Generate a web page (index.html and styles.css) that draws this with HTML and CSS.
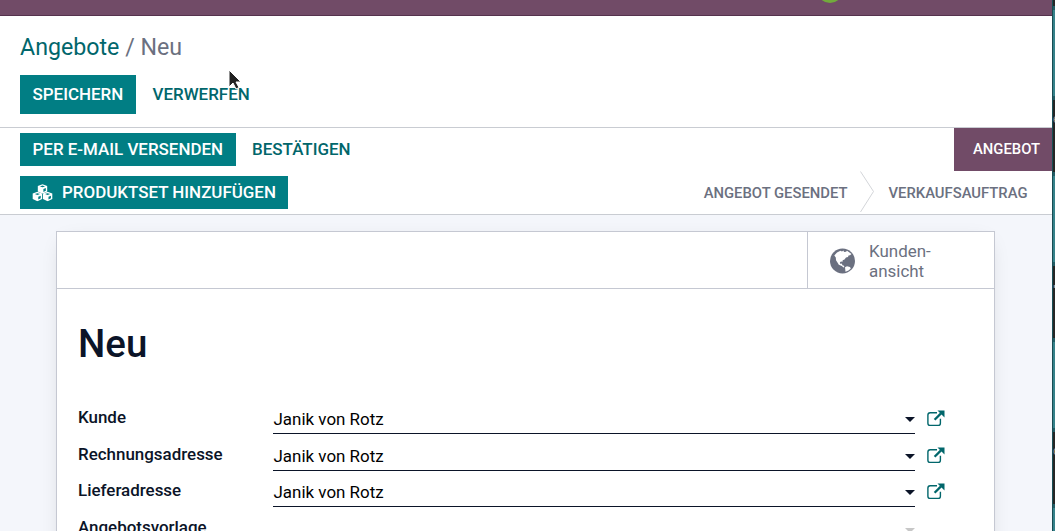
FILE: index.html
```html
<!DOCTYPE html>
<html lang="de">
<head>
<meta charset="utf-8">
<title>Angebote / Neu</title>
<link rel="stylesheet" href="styles.css">
</head>
<body>
<svg class="defs" width="0" height="0">
  <symbol id="external" viewBox="0 0 18 17">
    <path d="M10 2.800H3.200Q.9 2.800.9 5v8.200q0 2.200 2.300 2.200h7.900q2.300 0 2.300-2.200V8.800" fill="none" stroke="currentColor" stroke-width="1.400"/>
    <path d="M7.600 9.800 14 3.400" fill="none" stroke="currentColor" stroke-width="2.300"/>
    <path d="M10.500.5h7v7z" fill="currentColor"/>
  </symbol>
  <symbol id="cube" viewBox="0 0 10 10">
    <path d="M5 .2 9.800 2v5.600L5 9.900.2 7.600V2z" fill="currentColor"/>
    <path d="M2.400 2.500 5 3.400l2.600-.9L5 1.600zM5.900 5.200v2.900l2.500-1.200V4.200z" fill="#017e84"/>
  </symbol>
</svg>
<div class="screen">
  <main class="window">
    <header class="navbar"><span class="avatar"></span></header>
    <section class="control">
      <h2 class="breadcrumb"><a>Angebote</a><span> / Neu</span></h2>
      <div class="actions">
        <button class="btn primary save">Speichern</button>
        <button class="btn link">Verwerfen</button>
      </div>
      <svg class="cursor" viewBox="0 0 14 22"><path d="M1 1v17l4-4 3 6 3-1.500-3-5.500h5z" fill="#222" stroke="#fff" stroke-width="1"/></svg>
    </section>
    <section class="statusbar">
      <div class="buttons">
        <div class="row">
          <button class="btn primary">Per E-Mail versenden</button>
          <button class="btn link">Bestätigen</button>
        </div>
        <div class="row">
          <button class="btn primary"><svg class="cubes" viewBox="0 0 21 18"><use href="#cube" x="5.100" y="0" width="10.800" height="9.800"/><use href="#cube" x="0" y="7.600" width="10.800" height="9.800"/><use href="#cube" x="10.200" y="7.600" width="10.800" height="9.800"/></svg>Produktset hinzufügen</button>
        </div>
      </div>
      <div class="stages">
        <span class="stage current">Angebot</span>
        <div class="later">
          <span class="stage">Angebot gesendet</span>
          <svg class="chevron" viewBox="0 0 14 42"><path d="M.5.5 13.500 20.500.5 41" fill="none" stroke="#d3d5d9"/></svg>
          <span class="stage">Verkaufsauftrag</span>
        </div>
      </div>
    </section>
    <section class="content">
      <div class="sheet">
        <div class="buttonbox">
          <div class="stat">
            <svg class="globe" viewBox="0 0 26 26"><circle cx="12.500" cy="13" r="12.500" fill="#6b7080"/><path d="M4.300 7.500 7 4.500l3.500-1.700 1.500.7 1.500-1 .5 1.500 2-.3 1-.9 4.500 3.200-1.500 1.200-1.500.3-.5 1.500-2 .5-1.500 2-1.800.8-.2 1.500-1.500-.2-1.200 1 .7 1.400 1.500-.4.300 1.600 1.300.4.900 1.400-.9.500-1.800-1.600-3-1.200-1.500-2.500-1.300-2-.2-2.700z" fill="#fff"/><path d="M15 19.300l2-1 3 .8.800 1.400-2.300 2-3 1.300-.2-2z" fill="#fff"/></svg>
            <span>Kunden-<br>ansicht</span>
          </div>
        </div>
        <h1>Neu</h1>
        <div class="fields">
          <label>Kunde</label><div class="input"><span>Janik von Rotz</span><i class="caret"></i></div><svg class="ext"><use href="#external"/></svg>
          <label>Rechnungsadresse</label><div class="input"><span>Janik von Rotz</span><i class="caret"></i></div><svg class="ext"><use href="#external"/></svg>
          <label>Lieferadresse</label><div class="input"><span>Janik von Rotz</span><i class="caret"></i></div><svg class="ext"><use href="#external"/></svg>
          <label>Angebotsvorlage</label><div class="input empty"><i class="caret"></i></div>
        </div>
      </div>
    </section>
  </main>
  <aside class="backdrop"><span class="peek p1">e</span><span class="peek p2">▪</span><span class="peek p3">o</span></aside>
</div>
</body>
</html>
```

FILE: styles.css
```css
* { box-sizing: border-box; }
body { margin: 0; font-family: Roboto, sans-serif; font-size: 16.940px; color: #0b1428; overflow: hidden; }
.defs { position: absolute; }
.screen { display: flex; height: 531px; overflow: hidden; }
.window { width: 1052px; height: 531px; display: flex; flex-direction: column; background: #fff; overflow: hidden; }
.navbar { position: relative; flex: none; height: 16px; background: #714b67; border-bottom: 1px solid #55324d; overflow: hidden; }
.avatar { position: absolute; left: 817px; top: -23px; width: 26px; height: 26px; border-radius: 50%; background: #72aa3c; }
.control { position: relative; flex: none; height: 112px; padding: 16px 20px 0; border-bottom: 1px solid #c9ccd2; }
.breadcrumb { margin: 0; height: 43px; font-size: 23.200px; line-height: 30px; font-weight: 400; color: #6b7080; white-space: pre; }
.breadcrumb a { color: #01666b; }
.actions, .row { display: flex; gap: 4px; }
.btn { height: 33px; padding: 0 12.500px; border: 0; font: 500 16.940px/33px Roboto, sans-serif; text-transform: uppercase; white-space: nowrap; display: flex; align-items: center; }
.actions .btn { height: 39px; line-height: 39px; }
.primary { background: #017e84; color: #fff; }
.link { background: none; color: #01666b; }
.save { width: 116px; }
.cursor { position: absolute; left: 228px; top: 53px; width: 14px; height: 22px; }
.statusbar { flex: none; height: 87px; display: flex; justify-content: space-between; border-bottom: 1px solid #c9ccd2; }
.buttons { padding: 5px 0 0 20px; display: flex; flex-direction: column; gap: 10px; }
.cubes { width: 21px; height: 18px; margin: 0 9px 0 -.5px; }
.stages { display: flex; flex-direction: column; align-items: flex-end; font-size: 14.820px; font-weight: 500; text-transform: uppercase; color: #6b7080; }
.stage { line-height: 43px; white-space: nowrap; }
.current { width: 98px; height: 43px; padding-left: 19px; background: #714b67; color: #fff; }
.later { display: flex; height: 43px; padding-right: 24.500px; }
.later .stage { line-height: 45px; }
.chevron { width: 14px; height: 42px; margin: 0 15px 0 12px; }
.content { flex: 1; padding: 16px 0 0 56px; background: #f4f6fb; }
.sheet { width: 939px; height: 400px; background: #fff; border: 1px solid #c5c8d2; box-shadow: 0 5px 20px -10px rgba(0,0,0,.25); }
.buttonbox { height: 57px; display: flex; justify-content: flex-end; border-bottom: 1px solid #c5c8d2; }
.stat { width: 187px; border-left: 1px solid #c5c8d2; padding: 2px 0 0 22px; display: flex; align-items: center; gap: 13px; line-height: 20px; color: #6b7080; }
.globe { width: 26px; height: 26px; }
h1 { margin: 31px 0 0 21px; height: 48px; font-size: 38.500px; line-height: 48px; font-weight: 500; }
.fields { margin: 32px 0 0 21px; display: grid; grid-template-columns: 195px 642px 18px; grid-template-rows: 37px 36px 37px 36px; }
.fields label { font-weight: 500; line-height: 34px; }
.input { display: flex; justify-content: space-between; align-items: center; height: 33px; margin-top: 1px; border-bottom: 1px solid #0b1428; color: #000; padding: 3px 0 0 .5px; line-height: 30px; }
.caret { margin-top: 2px; border: 5px solid transparent; border-top-color: #0b1428; border-bottom: 0; }
.ext { width: 18px; height: 17px; margin: 10px 0 0 12px; color: #01666b; }
.empty { border: 0; justify-content: flex-end; padding-top: 4px; }
.empty .caret { border-top-color: #c7c7c7; }
.backdrop { position: relative; width: 3px; height: 531px; overflow: hidden; background: repeating-linear-gradient(#225c64 0 4px, #36828a 4px 90px, #225c64 90px 94px, #252625 94px 166px) 0 -160px / 100% 691px; border-left: 1px solid #184d54; }
.peek { position: absolute; left: 0; font-size: 12px; line-height: 12px; color: #999; }
.p1 { top: 113px; }
.p2 { top: 280px; }
.p3 { top: 445px; }
```
